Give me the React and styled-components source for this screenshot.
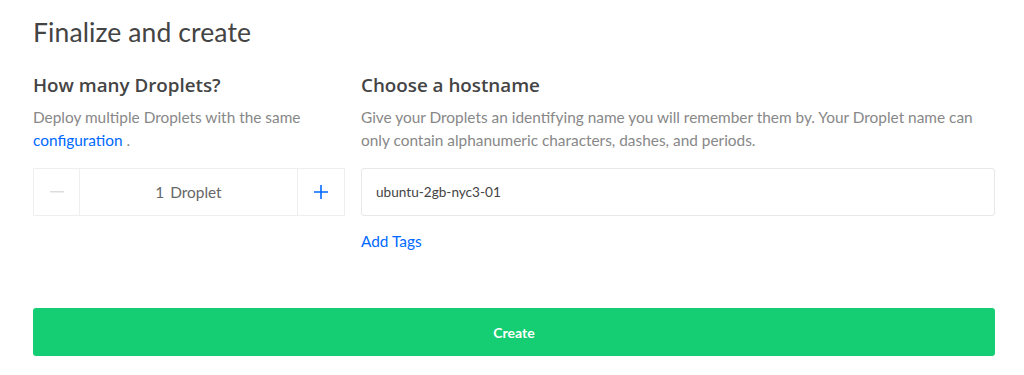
import React from "react";
import styled, { createGlobalStyle } from "styled-components";

const Global = createGlobalStyle`
  html, body { margin: 0; padding: 0; background: #fff; }
  body { font-family: Lato, "Open Sans", sans-serif; -webkit-font-smoothing: antialiased; }
  * { box-sizing: border-box; }
`;

const Page = styled.div`
  padding: 15px 29px 0 33px;
`;

const Title = styled.h2`
  margin: 0;
  font-size: 26.5px;
  font-weight: 400;
  color: #444;
  line-height: 34px;
  letter-spacing: 0.1px;
`;

const Columns = styled.div`
  display: grid;
  grid-template-columns: 312px 1fr;
  column-gap: 16px;
  margin-top: 24px;
`;

const Column = styled.div`
  display: flex;
  flex-direction: column;
`;

const Heading = styled.h3`
  margin: 0;
  font-family: "Open Sans", Lato, sans-serif;
  font-size: 18.8px;
  font-weight: 600;
  color: #444;
  line-height: 24px;
`;

const Desc = styled.p`
  margin: 9px 0 0;
  font-size: 15.4px;
  line-height: 23px;
  color: #888;
`;

const Link = styled.a`
  color: #0069ff;
  text-decoration: none;
  cursor: pointer;
`;

const Stepper = styled.div`
  margin-top: 16px;
  display: flex;
  height: 48px;
  border: 1.5px solid #efefef;
`;

const StepButton = styled.button`
  width: ${(p) => p.$w}px;
  flex: none;
  border: none;
  border-left: ${(p) => (p.$side === "right" ? "1.5px solid #efefef" : "none")};
  border-right: ${(p) => (p.$side === "left" ? "1.5px solid #efefef" : "none")};
  background: #fff;
  display: flex;
  align-items: center;
  justify-content: center;
  padding: 0;
  cursor: pointer;
`;

const Count = styled.div`
  flex: 1;
  display: flex;
  align-items: center;
  justify-content: center;
  font-size: 15.4px;
  color: #666;
  word-spacing: 2px;
`;

const Input = styled.input`
  margin-top: 16px;
  height: 48px;
  width: 100%;
  border: 1.5px solid #e8e8e8;
  border-radius: 3px;
  padding: 0 14px;
  font-family: inherit;
  font-size: 13.6px;
  color: #444;
  outline: none;
`;

const TagLink = styled(Link)`
  margin-top: 13px;
  font-size: 15.4px;
  line-height: 24px;
  align-self: flex-start;
`;

const CreateButton = styled.button`
  margin-top: 55px;
  width: 100%;
  height: 48px;
  border: none;
  border-radius: 3px;
  background: #15cd72;
  color: #fff;
  font-family: inherit;
  font-size: 14px;
  font-weight: 700;
  cursor: pointer;
`;

export default function App() {
  return (
    <>
      <Global />
      <Page>
        <Title>Finalize and create</Title>
        <Columns>
          <Column>
            <Heading>How many Droplets?</Heading>
            <Desc>
              Deploy multiple Droplets with the same <Link>configuration</Link> .
            </Desc>
            <Stepper>
              <StepButton $w={46} $side="left" aria-label="decrease">
                <svg width="14" height="2" viewBox="0 0 14 2">
                  <rect width="14" height="1.5" fill="#ddd" />
                </svg>
              </StepButton>
              <Count>1 Droplet</Count>
              <StepButton $w={47} $side="right" aria-label="increase">
                <svg width="16" height="16" viewBox="0 0 16 16">
                  <path d="M8 1v14M1 8h14" stroke="#0069ff" strokeWidth="1.6" />
                </svg>
              </StepButton>
            </Stepper>
          </Column>
          <Column>
            <Heading>Choose a hostname</Heading>
            <Desc>
              Give your Droplets an identifying name you will remember them by. Your Droplet name can only
              contain alphanumeric characters, dashes, and periods.
            </Desc>
            <Input defaultValue="ubuntu-2gb-nyc3-01" />
            <TagLink>Add Tags</TagLink>
          </Column>
        </Columns>
        <CreateButton>Create</CreateButton>
      </Page>
    </>
  );
}
